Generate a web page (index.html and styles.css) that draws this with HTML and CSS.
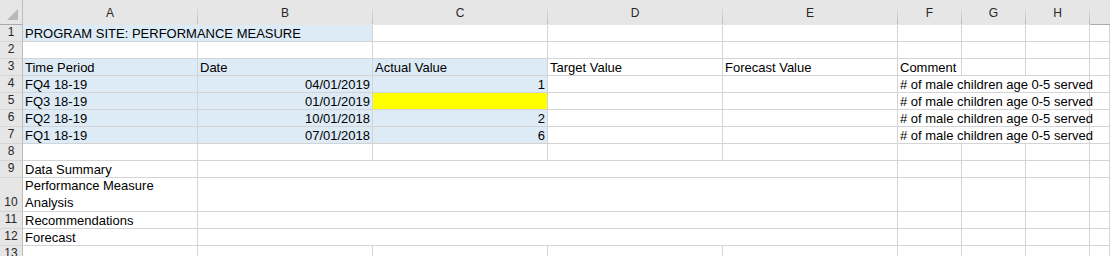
FILE: index.html
```html
<!DOCTYPE html>
<html>
<head>
<meta charset="utf-8">
<link rel="stylesheet" href="styles.css">
</head>
<body>
<div class="sheet">
  <div class="corner"><svg width="23" height="24" viewBox="0 0 23 24"><polygon points="7,20 18,20 18,9" fill="#b9b9b9"/></svg></div>
  <div class="ch">A</div><div class="ch">B</div><div class="ch">C</div><div class="ch">D</div><div class="ch">E</div><div class="ch">F</div><div class="ch">G</div><div class="ch">H</div><div class="ch last"></div>

  <div class="rh">1</div>
  <div class="c blue s2">PROGRAM SITE: PERFORMANCE MEASURE</div>
  <div class="c"></div><div class="c"></div><div class="c"></div><div class="c"></div><div class="c"></div><div class="c"></div><div class="c"></div>

  <div class="rh">2</div>
  <div class="c"></div><div class="c"></div><div class="c"></div><div class="c"></div><div class="c"></div><div class="c"></div><div class="c"></div><div class="c"></div><div class="c"></div>

  <div class="rh">3</div>
  <div class="c blue">Time Period</div><div class="c blue">Date</div><div class="c blue">Actual Value</div><div class="c">Target Value</div><div class="c">Forecast Value</div><div class="c">Comment</div><div class="c"></div><div class="c"></div><div class="c"></div>

  <div class="rh">4</div>
  <div class="c blue">FQ4 18-19</div><div class="c blue r">04/01/2019</div><div class="c blue r">1</div><div class="c"></div><div class="c"></div><div class="c s3">#&nbsp;of male children age 0-5 served</div><div class="c"></div>

  <div class="rh">5</div>
  <div class="c blue">FQ3 18-19</div><div class="c blue r">01/01/2019</div><div class="c yellow r"></div><div class="c"></div><div class="c"></div><div class="c s3">#&nbsp;of male children age 0-5 served</div><div class="c"></div>

  <div class="rh">6</div>
  <div class="c blue">FQ2 18-19</div><div class="c blue r">10/01/2018</div><div class="c blue r">2</div><div class="c"></div><div class="c"></div><div class="c s3">#&nbsp;of male children age 0-5 served</div><div class="c"></div>

  <div class="rh">7</div>
  <div class="c blue">FQ1 18-19</div><div class="c blue r">07/01/2018</div><div class="c blue r">6</div><div class="c"></div><div class="c"></div><div class="c s3">#&nbsp;of male children age 0-5 served</div><div class="c"></div>

  <div class="rh">8</div>
  <div class="c"></div><div class="c"></div><div class="c"></div><div class="c"></div><div class="c"></div><div class="c"></div><div class="c"></div><div class="c"></div><div class="c"></div>

  <div class="rh">9</div>
  <div class="c">Data Summary</div><div class="c s4"></div><div class="c"></div><div class="c"></div><div class="c"></div><div class="c"></div>

  <div class="rh">10</div>
  <div class="c wrap">Performance Measure<br>Analysis</div><div class="c s4"></div><div class="c"></div><div class="c"></div><div class="c"></div><div class="c"></div>

  <div class="rh">11</div>
  <div class="c">Recommendations</div><div class="c s4"></div><div class="c"></div><div class="c"></div><div class="c"></div><div class="c"></div>

  <div class="rh">12</div>
  <div class="c">Forecast</div><div class="c s4"></div><div class="c"></div><div class="c"></div><div class="c"></div><div class="c"></div>

  <div class="rh">13</div>
  <div class="c"></div><div class="c"></div><div class="c"></div><div class="c"></div><div class="c"></div><div class="c"></div><div class="c"></div><div class="c"></div><div class="c"></div>
</div>
</body>
</html>
```

FILE: styles.css
```css
html, body {
  margin: 0;
  padding: 0;
  background: #ffffff;
  overflow: hidden;
}

.sheet {
  display: grid;
  grid-template-columns: 23px repeat(5, 175px) repeat(3, 64px) 1fr;
  grid-template-rows: 25px repeat(9, 17px) 34px 17px 17px 17px;
  width: 1110px;
  font-family: "Liberation Sans", Arial, sans-serif;
  font-size: 13px;
  color: #000;
}

.corner {
  background: #e6e6e6;
  border-right: 1px solid #bcbcbc;
  border-bottom: 1px solid #ababab;
  box-sizing: border-box;
}
.corner svg { display: block; }

.ch {
  background: #e6e6e6;
  border-bottom: 1px solid #ababab;
  border-right: 1px solid;
  border-image: linear-gradient(to bottom, #e6e6e6 15%, #bdbdbd 100%) 0 1 0 0;
  box-sizing: border-box;
  display: flex;
  align-items: center;
  justify-content: center;
  font-size: 12px;
  color: #262626;
  padding-top: 1px;
}
.ch.last { border-right: none; border-image: none; }
.ch { border-bottom: 1px solid #ababab; }

.rh {
  background: #e6e6e6;
  border-right: 1px solid #bcbcbc;
  border-bottom: 1px solid #d5d5d5;
  box-sizing: border-box;
  display: flex;
  align-items: flex-end;
  justify-content: center;
  font-size: 12px;
  line-height: 15px;
  color: #262626;
  padding-bottom: 1px;
}

.c {
  border-right: 1px solid #d4d4d4;
  border-bottom: 1px solid #d4d4d4;
  box-sizing: border-box;
  display: flex;
  align-items: flex-end;
  padding: 0 2px;
  line-height: 15px;
  white-space: nowrap;
  overflow: visible;
  min-width: 0;
}

.c.r { justify-content: flex-end; }
.c.blue { background: #ddebf7; }
.c.yellow { background: #ffff00; }
.c.s2 { grid-column: span 2; }
.c.s3 { grid-column: span 3; position: relative; z-index: 1; }
.c.s4 { grid-column: span 4; }
.c.wrap { white-space: normal; line-height: 17px; padding-bottom: 0; }
```
